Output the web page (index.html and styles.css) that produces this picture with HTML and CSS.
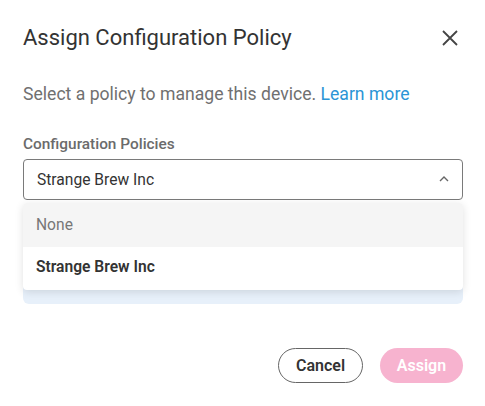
FILE: index.html
```html
<!DOCTYPE html>
<html lang="en">
<head>
    <meta charset="UTF-8">
    <meta name="viewport" content="width=device-width, initial-scale=1.0">
    <title>Assign Configuration Policy</title>
    <link rel="stylesheet" href="styles.css">
</head>
<body>
    <div class="dialog">
        <div class="dialog-header">
            <h1 class="dialog-title">Assign Configuration Policy</h1>
            <button class="close-button" aria-label="Close">
                <svg width="16" height="16" viewBox="0 0 16 16">
                    <path d="M1 1 L15 15 M15 1 L1 15" stroke="#444" stroke-width="1.8" fill="none"/>
                </svg>
            </button>
        </div>

        <p class="dialog-text">Select a policy to manage this device. <a href="#" class="learn-more">Learn more</a></p>

        <label class="field-label">Configuration Policies</label>
        <div class="select-wrap">
            <div class="select-box">
                <span>Strange Brew Inc</span>
                <svg class="chevron" width="10" height="6" viewBox="0 0 10 6">
                    <path d="M1 5 L5 1 L9 5" stroke="#666" stroke-width="1.4" fill="none"/>
                </svg>
            </div>
            <ul class="select-menu">
                <li class="menu-item hover">None</li>
                <li class="menu-item selected">Strange Brew Inc</li>
            </ul>
        </div>
        <div class="info-box"></div>

        <div class="dialog-actions">
            <button class="btn btn-outline">Cancel</button>
            <button class="btn btn-primary" disabled>Assign</button>
        </div>
    </div>
</body>
</html>
```

FILE: styles.css
```css
* {
    box-sizing: border-box;
}

body {
    margin: 0;
    background-color: #fff;
    font-family: Roboto, "Liberation Sans", sans-serif;
    color: #333;
}

.dialog {
    padding: 24px 22px 0 23px;
}

.dialog-header {
    display: flex;
    justify-content: space-between;
    align-items: center;
}

.dialog-title {
    margin: 0;
    font-size: 22px;
    font-weight: 400;
    color: #333;
    line-height: 28px;
}

.close-button {
    border: none;
    background: transparent;
    padding: 0;
    margin-right: 4px;
    width: 18px;
    height: 18px;
    display: flex;
    align-items: center;
    justify-content: center;
    cursor: pointer;
}

.dialog-text {
    margin: 30px 0 0;
    font-size: 17.6px;
    line-height: 24px;
    color: #707070;
}

.learn-more {
    color: #2b95d6;
    text-decoration: none;
}

.field-label {
    display: block;
    margin-top: 28px;
    font-size: 15.4px;
    font-weight: 500;
    line-height: 20px;
    color: #6b6b6b;
}

.select-wrap {
    position: relative;
    margin-top: 5px;
}

.select-box {
    height: 41px;
    border: 1px solid #7a7a7a;
    border-radius: 4px;
    display: flex;
    align-items: center;
    justify-content: space-between;
    padding: 0 13px 0 13px;
    font-size: 15.6px;
    color: #333;
}

.chevron {
    margin-top: -2px;
}

.select-menu {
    position: absolute;
    top: 44px;
    left: 0;
    right: 0;
    margin: 0;
    padding: 0;
    list-style: none;
    background-color: #fff;
    border-radius: 4px;
    box-shadow: 0 2px 8px rgba(0, 0, 0, 0.12);
    overflow: hidden;
    z-index: 2;
}

.menu-item {
    height: 43px;
    display: flex;
    align-items: center;
    padding: 0 13px 3px;
    font-size: 15.6px;
}

.menu-item.hover {
    background-color: #f5f5f5;
    color: #777;
    height: 44px;
    padding-bottom: 0;
}

.menu-item.selected {
    font-weight: 600;
    color: #333;
}

.info-box {
    margin-top: 14px;
    height: 90px;
    background-color: #e7f0fa;
    border-radius: 0 0 6px 6px;
}

.dialog-actions {
    display: flex;
    justify-content: flex-end;
    gap: 17px;
    margin-top: 44px;
}

.btn {
    height: 35px;
    border-radius: 18px;
    font-family: Roboto, "Liberation Sans", sans-serif;
    font-size: 16px;
    font-weight: 600;
    padding: 0;
    cursor: pointer;
}

.btn-outline {
    width: 85px;
    background-color: #fff;
    border: 1px solid #666;
    color: #333;
}

.btn-primary {
    width: 83px;
    background-color: #f7b3cf;
    border: none;
    color: #fff;
}
```
